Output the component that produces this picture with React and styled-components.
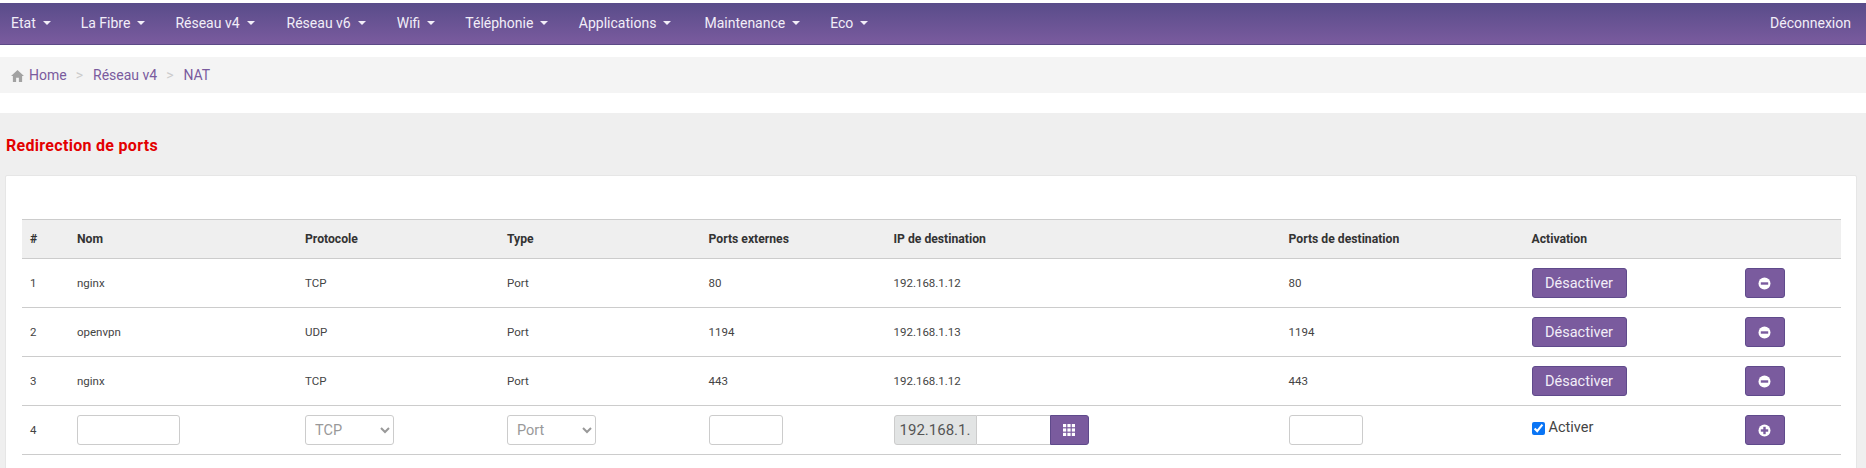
import styled, { createGlobalStyle } from "styled-components";

const GlobalStyle = createGlobalStyle`
  html, body {
    margin: 0;
    padding: 0;
    background: #fff;
    font-family: "Roboto", "Liberation Sans", sans-serif;
    color: #333;
  }
  * {
    box-sizing: border-box;
  }
`;

const Page = styled.div`
  width: 1866px;
  height: 468px;
  overflow: hidden;
  padding-top: 3px;
`;

const NavBar = styled.nav`
  display: flex;
  justify-content: space-between;
  align-items: center;
  height: 42px;
  padding: 0 15px 1px 11px;
  background: linear-gradient(to bottom, #594c8a, #7a5b9e);
  border-bottom: 1px solid #5c4a86;
  color: #f2eef8;
  font-size: 14px;
`;

const NavList = styled.div`
  display: flex;
`;

const NavItem = styled.span`
  display: flex;
  align-items: center;
  margin-right: ${({ $gap }) => $gap}px;
`;

const Caret = styled.i`
  width: 0;
  height: 0;
  margin-left: 7px;
  border-top: 4px solid #f2eef8;
  border-left: 4px solid transparent;
  border-right: 4px solid transparent;
`;

const Breadcrumb = styled.div`
  display: flex;
  align-items: center;
  height: 36px;
  margin-top: 12px;
  padding-left: 11px;
  background: #f4f4f4;
  color: #7a5b9e;
  font-size: 14px;
`;

const HomeIcon = styled.svg`
  width: 13px;
  height: 12px;
  margin-right: 5px;
  margin-top: 2px;
  fill: #a2a2a2;
`;

const Sep = styled.span`
  margin: 0 10px 0 9px;
  color: #ccc;
`;

const Content = styled.main`
  margin-top: 20px;
  padding: 25px 9px 0 5px;
  height: 355px;
  background: #efefef;
`;

const Title = styled.h2`
  margin: 0 0 21px 1px;
  height: 16px;
  color: #e30000;
  font-size: 16px;
  letter-spacing: 0.3px;
  line-height: 16px;
  font-weight: 700;
`;

const Card = styled.section`
  padding: 43px 15px 0 16px;
  height: 300px;
  background: #fff;
  border: 1px solid #e6e6e6;
  border-radius: 2px;
`;

const Table = styled.table`
  width: 1819px;
  table-layout: fixed;
  border-collapse: collapse;
  font-size: 11.5px;
`;

const HeadCell = styled.th`
  height: 39px;
  padding: 0 8px;
  background: #efefef;
  border-top: 1px solid #ccc;
  border-bottom: 1px solid #ccc;
  text-align: left;
  font-size: 12.2px;
  font-weight: 700;
  color: #333;
`;

const Cell = styled.td`
  height: 49px;
  padding: 0 8px;
  border-bottom: 1px solid #ccc;
  color: #444;
`;

const TextInput = styled.input`
  display: block;
  width: ${({ $width }) => $width}px;
  height: 30px;
  background: #fff;
  border: 1px solid #ccc;
  border-radius: 3px;
`;

const SelectBox = styled.select`
  display: block;
  width: 89px;
  height: 30px;
  padding-left: 5px;
  background: #fff;
  border: 1px solid #ccc;
  border-radius: 3px;
  color: #999;
  font-family: inherit;
  font-size: 14.5px;
`;

const IpGroup = styled.div`
  display: flex;
  width: 195px;
  height: 30px;
`;

const IpPrefix = styled.span`
  display: flex;
  align-items: center;
  justify-content: center;
  width: 83px;
  background: #e2e4e4;
  border: 1px solid #ccc;
  border-radius: 3px 0 0 3px;
  color: #555;
  font-size: 15px;
`;

const IpInput = styled.input`
  width: 73px;
  min-width: 0;
  background: #fff;
  border: 1px solid #ccc;
  border-left: 0;
  border-right: 0;
`;

const IpButton = styled.button`
  display: flex;
  align-items: center;
  justify-content: center;
  width: 39px;
  padding: 0;
  background: #7a5b9e;
  border: 1px solid #5f4a8b;
  border-radius: 0 3px 3px 0;
`;

const ActionButton = styled.button`
  display: flex;
  align-items: center;
  justify-content: center;
  width: ${({ $width }) => $width}px;
  height: 30px;
  padding: 0;
  background: #7a5b9e;
  border: 1px solid #5f4a8b;
  border-radius: 3px;
  color: #f2eef8;
  font-family: inherit;
  font-size: 14.5px;
`;

const Toggle = styled.label`
  display: flex;
  align-items: center;
  gap: 4px;
  padding-bottom: 5px;
  color: #444;
  font-size: 14.5px;
`;

const Check = styled.input`
  width: 13px;
  height: 13px;
  margin: 2px 0 0;
  accent-color: #0a75f5;
`;

const columns = [47, 228, 202, 201.5, 185, 395, 243, 213, 104.5];

const headers = [
  "#",
  "Nom",
  "Protocole",
  "Type",
  "Ports externes",
  "IP de destination",
  "Ports de destination",
  "Activation",
  "",
];

const rules = [
  { id: 1, name: "nginx", proto: "TCP", ext: "80", ip: "192.168.1.12", dest: "80" },
  { id: 2, name: "openvpn", proto: "UDP", ext: "1194", ip: "192.168.1.13", dest: "1194" },
  { id: 3, name: "nginx", proto: "TCP", ext: "443", ip: "192.168.1.12", dest: "443" },
];

const menu = [
  ["Etat", 30],
  ["La Fibre", 30],
  ["Réseau v4", 32],
  ["Réseau v6", 31],
  ["Wifi", 30],
  ["Téléphonie", 30.5],
  ["Applications", 33],
  ["Maintenance", 30],
  ["Eco", 0],
];

function GridIcon() {
  return (
    <svg width="12" height="12" viewBox="0 0 12 12" fill="#fff">
      {[0, 4.4, 8.8].map((y) =>
        [0, 4.4, 8.8].map((x) => (
          <rect key={`${x}-${y}`} x={x} y={y} width="3.2" height="3.2" />
        ))
      )}
    </svg>
  );
}

function SignIcon({ plus }) {
  return (
    <svg width="13" height="13" viewBox="0 0 13 13">
      <circle cx="6.5" cy="6.5" r="6" fill="#fff" />
      <rect x="2.8" y="5.3" width="7.4" height="2.4" fill="#7a5b9e" />
      {plus && <rect x="5.3" y="2.8" width="2.4" height="7.4" fill="#7a5b9e" />}
    </svg>
  );
}

export default function App() {
  return (
    <Page>
      <GlobalStyle />
      <NavBar>
        <NavList>
          {menu.map(([label, gap]) => (
            <NavItem key={label} $gap={gap}>
              {label}
              <Caret />
            </NavItem>
          ))}
        </NavList>
        <span>Déconnexion</span>
      </NavBar>

      <Breadcrumb>
        <HomeIcon viewBox="0 0 14 13">
          <path d="M7 0 L14 6.6 H12 V13 H8.5 V8.5 H5.5 V13 H2 V6.6 H0 Z" />
        </HomeIcon>
        <span>Home</span>
        <Sep>&gt;</Sep>
        <span>Réseau v4</span>
        <Sep>&gt;</Sep>
        <span>NAT</span>
      </Breadcrumb>

      <Content>
        <Title>Redirection de ports</Title>
        <Card>
          <Table>
            <colgroup>
              {columns.map((w, i) => (
                <col key={i} style={{ width: w }} />
              ))}
            </colgroup>
            <thead>
              <tr>
                {headers.map((h, i) => (
                  <HeadCell key={i}>{h}</HeadCell>
                ))}
              </tr>
            </thead>
            <tbody>
              {rules.map((r) => (
                <tr key={r.id}>
                  <Cell>{r.id}</Cell>
                  <Cell>{r.name}</Cell>
                  <Cell>{r.proto}</Cell>
                  <Cell>Port</Cell>
                  <Cell>{r.ext}</Cell>
                  <Cell>{r.ip}</Cell>
                  <Cell>{r.dest}</Cell>
                  <Cell>
                    <ActionButton $width={95}>Désactiver</ActionButton>
                  </Cell>
                  <Cell>
                    <ActionButton $width={40}>
                      <SignIcon />
                    </ActionButton>
                  </Cell>
                </tr>
              ))}
              <tr>
                <Cell>4</Cell>
                <Cell>
                  <TextInput $width={103} />
                </Cell>
                <Cell>
                  <SelectBox defaultValue="TCP">
                    <option>TCP</option>
                    <option>UDP</option>
                  </SelectBox>
                </Cell>
                <Cell>
                  <SelectBox defaultValue="Port">
                    <option>Port</option>
                    <option>Plage</option>
                  </SelectBox>
                </Cell>
                <Cell>
                  <TextInput $width={74} />
                </Cell>
                <Cell>
                  <IpGroup>
                    <IpPrefix>192.168.1.</IpPrefix>
                    <IpInput />
                    <IpButton>
                      <GridIcon />
                    </IpButton>
                  </IpGroup>
                </Cell>
                <Cell>
                  <TextInput $width={74} />
                </Cell>
                <Cell>
                  <Toggle>
                    <Check type="checkbox" defaultChecked />
                    Activer
                  </Toggle>
                </Cell>
                <Cell>
                  <ActionButton $width={40}>
                    <SignIcon plus />
                  </ActionButton>
                </Cell>
              </tr>
            </tbody>
          </Table>
        </Card>
      </Content>
    </Page>
  );
}
